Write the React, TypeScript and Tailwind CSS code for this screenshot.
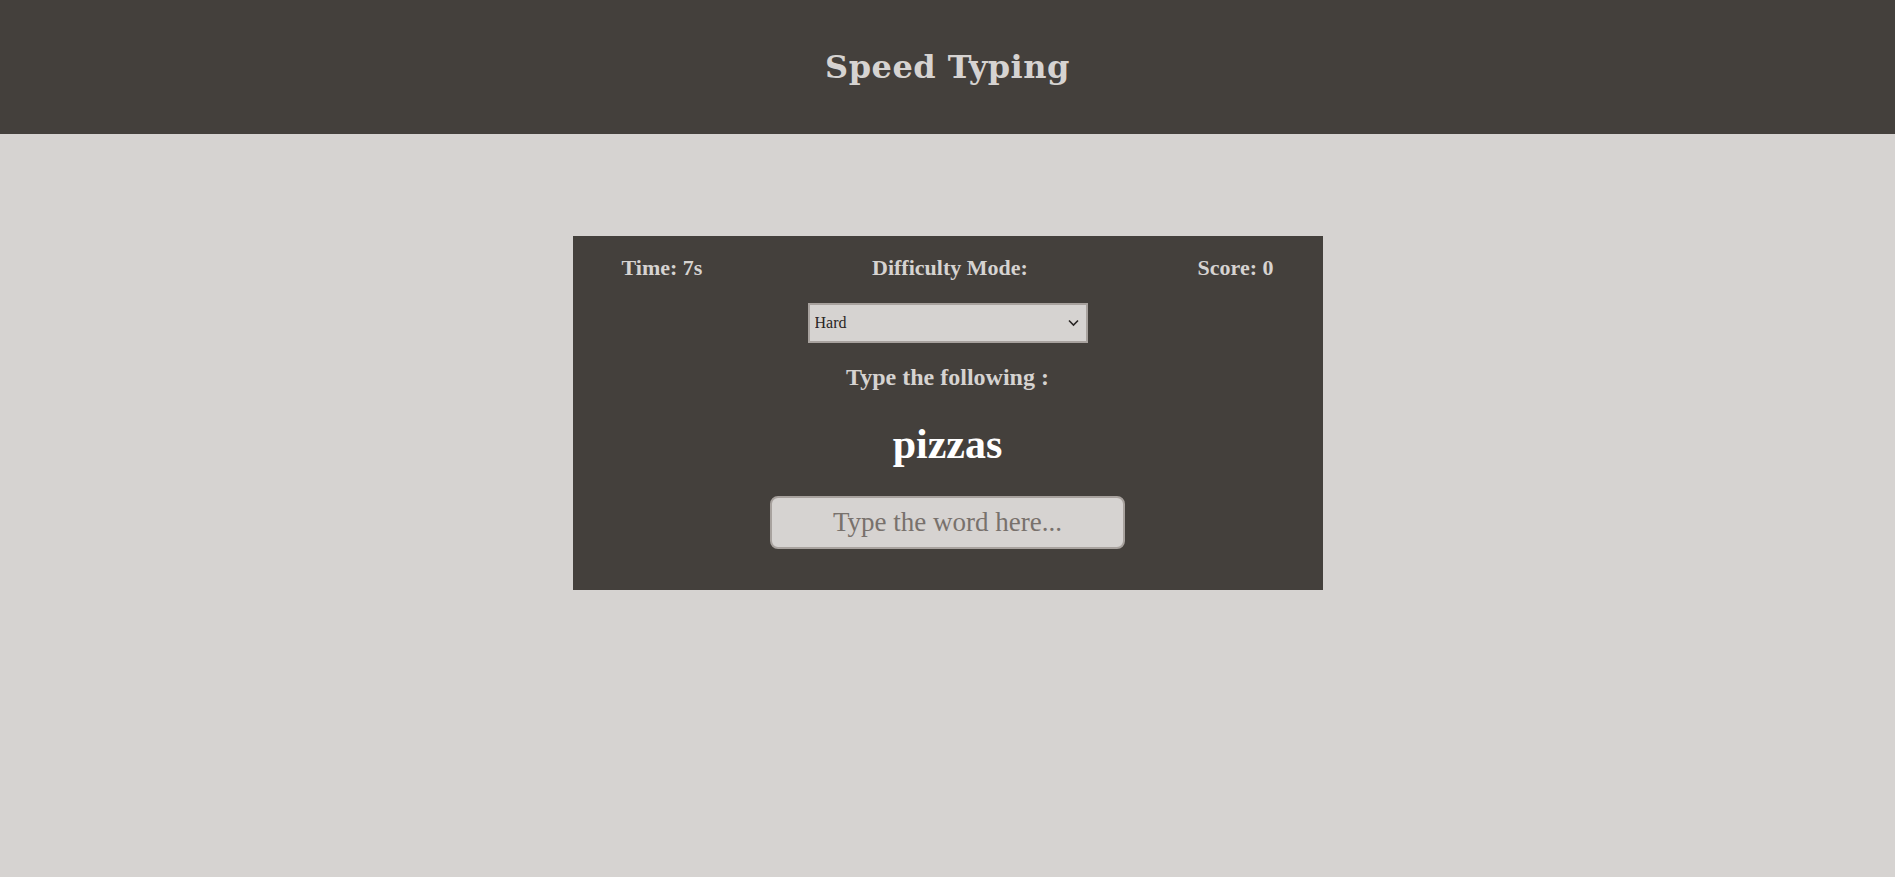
export default function App() {
  return (
    <div className="min-h-[877px] bg-[#d6d3d1] font-['Liberation_Serif',serif]">
      <header className="flex h-[134px] items-center justify-center bg-[#44403c]">
        <h1 className="font-['DejaVu_Serif',serif] text-[32px] font-bold tracking-[0.5px] text-[#d6d3d1]">Speed Typing</h1>
      </header>

      <main className="flex justify-center pt-[102px]">
        <div className="flex w-[750px] flex-col items-center bg-[#44403c] px-[49px] pt-[19px] pb-[41px] text-[#d6d3d1]">
          <div className="flex w-full items-center justify-between text-[22px] leading-[26px] font-bold">
            <span>Time: 7s</span>
            <span>Difficulty Mode:</span>
            <span>Score: 0</span>
          </div>

          <div className="relative mt-[22px] h-[40px] w-[280px] border-2 border-[#a8a29e] bg-[#d6d3d1]">
            <select
              defaultValue="hard"
              className="h-full w-full appearance-none bg-transparent px-[5px] text-[16px] text-[#292524] outline-none"
            >
              <option value="easy">Easy</option>
              <option value="medium">Medium</option>
              <option value="hard">Hard</option>
            </select>
            <svg
              className="pointer-events-none absolute right-[7px] top-[14px]"
              width="11"
              height="8"
              viewBox="0 0 11 8"
              fill="none"
              stroke="#292524"
              strokeWidth="1.6"
            >
              <path d="M1 1.5 L5.5 6 L10 1.5" />
            </svg>
          </div>

          <p className="mt-[21px] text-[24px] leading-[26px] font-bold">Type the following :</p>

          <p className="mt-[33px] text-[42px] leading-[42px] font-bold text-white">pizzas</p>

          <input
            type="text"
            placeholder="Type the word here..."
            className="mt-[31px] h-[53px] w-[355px] rounded-[8px] border-2 border-[#a8a29e] bg-[#d6d3d1] text-center text-[27px] text-[#292524] outline-none placeholder:text-[#78716c]"
          />
        </div>
      </main>
    </div>
  );
}
